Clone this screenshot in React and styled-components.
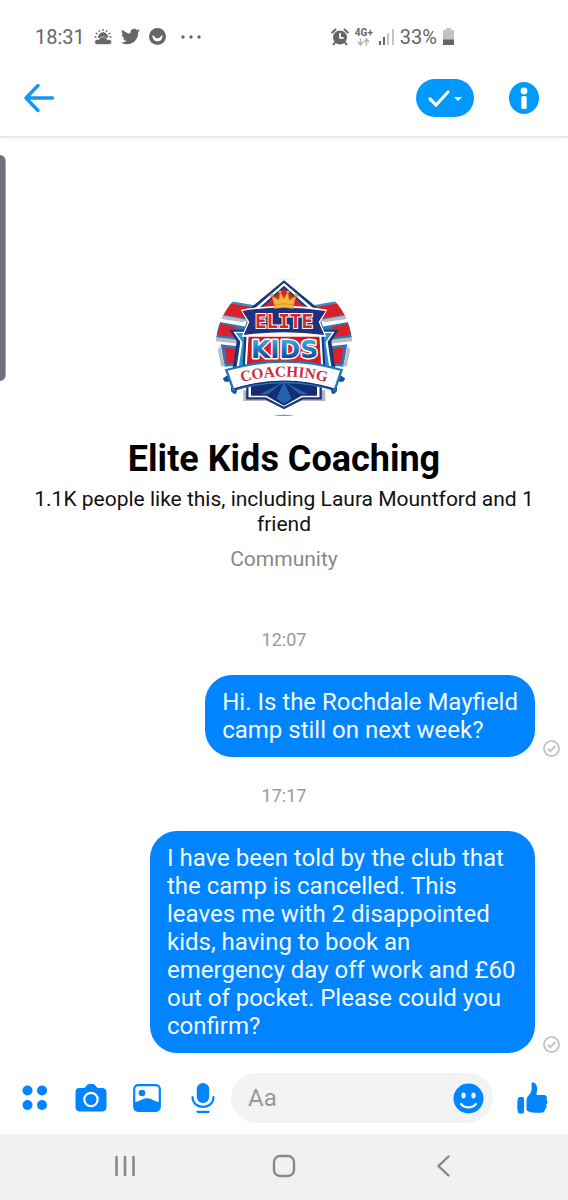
import React from "react";
import styled, { createGlobalStyle } from "styled-components";
import { FaTwitter } from "react-icons/fa";

const GlobalStyle = createGlobalStyle`
  *, *::before, *::after { box-sizing: border-box; }
  body { margin: 0; background: #fff; font-family: Roboto, "Liberation Sans", sans-serif; }
  h1, p { margin: 0; font-weight: 400; }
  button { border: 0; padding: 0; background: none; cursor: pointer; font: inherit; }
  svg { display: block; flex: none; }
`;

const Page = styled.div`
  display: flex;
  flex-direction: column;
  min-height: 100vh;
  background: #fff;
`;

const StatusBar = styled.div`
  display: flex;
  justify-content: space-between;
  align-items: center;
  height: 73px;
  padding: 0 114px 0 35px;
  color: #666;
  font-size: 20px;
`;

const StatusGroup = styled.div`
  display: flex;
  align-items: center;
  gap: ${(p) => p.$gap}px;
`;

const Network = styled.span`
  display: flex;
  flex-direction: column;
  align-items: center;
  font-size: 10px;
  line-height: 10px;
  font-weight: 700;
`;

const Header = styled.header`
  display: flex;
  align-items: center;
  height: 65px;
  padding: 0 29px 13px 23px;
  border-bottom: 2px solid #e9e9e9;
  box-shadow: 0 2px 3px rgba(0, 0, 0, 0.03);
`;

const IconButton = styled.button`
  display: flex;
  align-items: center;
  justify-content: center;
  color: #0084ff;
`;

const ToolButton = styled(IconButton)`
  width: 32px;
  height: 32px;
`;

const DoneButton = styled(IconButton)`
  width: 58px;
  height: 38px;
  margin: 0 35px 0 auto;
  border-radius: 19px;
  background: #0099ff;
`;

const Conversation = styled.main`
  position: relative;
  flex: 1;
`;

const EdgeHandle = styled.div`
  position: absolute;
  top: 17px;
  left: 0;
  width: 6px;
  height: 226px;
  border-radius: 0 6px 6px 0;
  background: #716e80;
  border-right: 1px solid #a9a7b3;
`;

const Profile = styled.section`
  display: flex;
  flex-direction: column;
  align-items: center;
  padding: 139px 30px 56px;
  text-align: center;
`;

const Name = styled.h1`
  margin-top: 20px;
  font-size: 36px;
  line-height: 44px;
  font-weight: 700;
  color: #000;
`;

const Likes = styled.p`
  margin-top: 6px;
  font-size: 21px;
  line-height: 25px;
  color: #111;
`;

const Category = styled.p`
  margin-top: 10px;
  font-size: 21px;
  line-height: 25px;
  color: #888;
`;

const Time = styled.time`
  display: block;
  margin-bottom: 23px;
  text-align: center;
  font-size: 18px;
  line-height: 24px;
  color: #999;
`;

const MessageRow = styled.div`
  display: flex;
  justify-content: flex-end;
  align-items: flex-end;
  gap: 8px;
  padding-right: 8px;
  & + time { margin-top: 27px; }
`;

const Bubble = styled.p`
  max-width: 385px;
  padding: 13px 17px;
  border-radius: 27px;
  background: #0084ff;
  color: #f2faff;
  font-size: 24px;
  line-height: 28px;
  white-space: pre-line;
`;

const Composer = styled.form`
  display: flex;
  align-items: center;
  padding: 20px 20px 11px 19px;
`;

const Tools = styled.div`
  display: flex;
  align-items: center;
  gap: 24px;
  margin-right: 12px;
`;

const Field = styled.div`
  display: flex;
  align-items: center;
  flex: 1;
  min-width: 0;
  height: 50px;
  margin-right: 24px;
  padding: 0 9px 0 17px;
  border-radius: 25px;
  background: #f1f3f5;
`;

const TextInput = styled.input`
  flex: 1;
  min-width: 0;
  padding: 0;
  border: 0;
  outline: 0;
  background: transparent;
  color: #222;
  font: 24px/28px Roboto, "Liberation Sans", sans-serif;
  &::placeholder { color: #999; opacity: 1; }
`;

const NavBar = styled.nav`
  display: flex;
  align-items: center;
  justify-content: center;
  gap: 136px;
  height: 66px;
  padding-bottom: 2px;
  background: #f1f1f1;
`;

const messages = [
  { time: "12:07", text: "Hi. Is the Rochdale Mayfield\ncamp still on next week?" },
  {
    time: "17:17",
    text: "I have been told by the club that the camp is cancelled. This leaves me with 2 disappointed kids, having to book an emergency day off work and £60 out of pocket. Please could you confirm?",
  },
];

const Weather = () => (
  <svg width="18" height="16" viewBox="0 0 18 16" fill="none" stroke="#666">
    <path d="M9 0v2M4.8 1.2l.9 1.7M13.2 1.2l-.9 1.7M1.8 4l1.6 1.1M16.2 4l-1.6 1.1M.5 8h2M15.5 8h2" strokeWidth="1.3" />
    <path d="M4.6 9a4.500 4.500 0 0 1 9-1.500l-1 2-3.600-2z" fill="#666" strokeWidth="1" />
    <path d="M3.300 15.500a2.600 2.600 0 0 1 0-5.200c.7 0 1.100.2 1.500.5.700-1.900 2.200-3 4.200-3s3.400 1 4 2.700c3-.4 4.700.7 4.700 2.500 0 1.600-1.200 2.500-2.700 2.500z" fill="#666" stroke="#fff" strokeWidth=".6" />
  </svg>
);

const FaceBadge = () => (
  <svg width="17" height="17" viewBox="0 0 17 17">
    <circle cx="8.500" cy="8.500" r="8.500" fill="#666" />
    <path d="M3.400 8c.4-.6 1.500-.5 1.900.2.600 1.400 1.700 2 3.200 2s2.600-.6 3.200-2c.4-.7 1.500-.8 1.900-.2-.2 3.300-2.100 5.300-5.100 5.300S3.600 11.300 3.400 8z" fill="#fff" />
  </svg>
);

const Alarm = () => (
  <svg width="18" height="18" viewBox="0 0 18 18" fill="none" stroke="#666" strokeLinecap="round">
    <circle cx="9" cy="9.500" r="7" fill="#666" stroke="none" />
    <path d="M1.200 4.500 4.500 1.500M16.800 4.500 13.500 1.500M4 14.500l-1.500 2M14 14.500l1.500 2" strokeWidth="2" />
    <path d="M9 5.500v4.300h3" stroke="#fff" strokeWidth="1.700" />
  </svg>
);

const Arrows = () => (
  <svg width="13" height="8" viewBox="0 0 13 8" fill="none" stroke="#b5b5b5" strokeWidth="1.500">
    <path d="M3.500.5v6M1 4l2.500 3L6 4M9.500 7.500v-6M7 4l2.500-3L12 4" />
  </svg>
);

const Signal = () => (
  <svg width="15" height="16" viewBox="0 0 15 16">
    <path d="M0 12h2v4H0zM4 8h2v8H4z" fill="#666" />
    <path d="M8 4h2v12H8zM13 0h2v16h-2z" fill="#c4c4c4" />
  </svg>
);

const Battery = () => (
  <svg width="11" height="17" viewBox="0 0 11 17">
    <path d="M3 0h5v2h3v10H0V2h3z" fill="#c2c2c2" />
    <path d="M0 11.500h11V17H0z" fill="#666" />
  </svg>
);

const Receipt = () => (
  <svg width="17" height="17" viewBox="0 0 17 17" fill="none" stroke="#bcc0c5" strokeWidth="1.700">
    <circle cx="8.500" cy="8.500" r="7.500" />
    <path d="m4.800 8.700 2.500 2.500 5-5.200" />
  </svg>
);

const WingSide = () => (
  <g>
    <path d="m66 90 104 18-42 44-86-14z" fill="#3a8fc4" />
    <path d="m74 98 88 16-32 32-78-14z" fill="#dc2029" />
    <path d="m52 135 74 13-6 8-74-11z" fill="#b9bec6" />
    <path d="m44 154 82 15-20 42-70-8z" fill="#2a78b8" />
    <path d="m48 160 48 10-6 30-50-6z" fill="#dc2029" />
    <path d="m32 200 72 8v12l-68-7z" fill="#b9bec6" />
    <path d="m50 222 62 7v56l-50 4z" fill="#2a78b8" />
    <path d="m62 232 44 4v44l-38 1z" fill="#dc2029" />
    <path d="m48 226 14 60-10 4-10-52z" fill="#b9bec6" />
  </g>
);

const Crest = () => (
  <svg width="140" height="140" viewBox="30 20 420 420" role="img" aria-label="Elite Kids Coaching crest">
    <defs>
      <clipPath id="round"><circle cx="240" cy="231" r="206" /></clipPath>
      <linearGradient id="kids" x1="0" y1="0" x2="0" y2="1">
        <stop offset="0.2" stopColor="#3aa5dc" />
        <stop offset="0.75" stopColor="#17509c" />
      </linearGradient>
      <radialGradient id="red"><stop stopColor="#f12b30" /><stop offset="1" stopColor="#c91826" /></radialGradient>
      <path id="ribbonLine" d="M105 337q135-36 270 0" />
    </defs>
    <g clipPath="url(#round)">
      <path d="M200 25h80" stroke="#c9c9c9" strokeWidth="4" />
      <path d="M200 437q40-8 80 0z" fill="#888" />
      <WingSide />
      <g transform="translate(480 0) scale(-1 1)"><WingSide /></g>
      <path d="M118 360v32h70l52 22 52-22h72v-32z" fill="#b3b6bf" />
      <path d="m240 30 112 92H128z" fill="#19377d" />
      <path d="m240 38 102 88H138z" fill="#fff" />
      <path d="m240 46 94 84H146z" fill="#19377d" />
      <path d="m240 54 84 74H156z" fill="url(#red)" />
      <path d="M76 178h44l10-29h220l10 29h44l-22 35 18 120H80l18-120z" fill="#19377d" />
      <path d="M88 184h40l5-27h214l5 27h40l-21 30 17 115H92l17-115z" fill="#fff" />
      <path d="M96 188h38l7-24h198l7 24h38l-19 27 16 113H99l16-113z" fill="#2a93d0" />
      <path d="M122 186h236l9 146H113z" fill="#19377d" />
      <path d="M128 190h224l8 141H120z" fill="#fff" />
      <path d="M134 194h212l8 137H126z" fill="url(#red)" />
      <path d="M130 320h220v64h-54l-56 29-56-29h-54z" fill="#fff" stroke="#19377d" strokeWidth="7" />
      <path d="M141 324h198v52h-46l-53 30-53-30h-46z" fill="#152c72" />
      <path d="m240 334-72 38h25l47-38-23 51 23 15 23-15-23-51 47 38h25z" fill="#2461ab" />
      <path d="M110 118q130-23 260 0l-21 37 18 44H113l18-44z" fill="#fff" />
      <path d="M115 122q125-21 250 0l-21 33 17 39q-121-17-242 0l17-39z" fill="#20317c" />
      <g fill="#f5b83d" stroke="#c97721" strokeWidth="2">
        <path d="m212 106-8-29 20 12 5-24 11 20 11-20 5 24 20-12-8 29q-28-7-56 0z" />
        <path d="M211 104q29-8 58 0v11q-29-8-58 0z" />
        <circle cx="203" cy="75" r="5" /><circle cx="228" cy="65" r="4" /><circle cx="252" cy="65" r="4" /><circle cx="277" cy="75" r="5" />
      </g>
      <text x="240" y="174" textAnchor="middle" fontFamily="DejaVu Sans Mono, monospace" fontWeight="700" fontSize="58" fill="#d82431" stroke="#fff" strokeWidth="6" paintOrder="stroke">ELITE</text>
      <text x="242" y="263" textAnchor="middle" fontFamily="DejaVu Sans, sans-serif" fontWeight="700" fontSize="75" fill="url(#kids)" stroke="#fff" strokeWidth="9" strokeLinejoin="round" paintOrder="stroke">KIDS</text>
      <path d="m55 325 21-14 29 30-9 30-15-3v-34H57zM425 325l-21-14-29 30 9 30 15-3v-34h24z" fill="#17509c" />
      <path d="M67 299q173-50 346 0l-21 60q-152-47-304 0z" fill="#fff" stroke="#2277b8" strokeWidth="7" />
      <path d="M91 356q149-47 298 0" fill="none" stroke="#152c72" strokeWidth="4" />
      <text fontFamily="Liberation Serif, serif" fontWeight="700" fontSize="46" fill="#c82f44" textAnchor="middle"><textPath href="#ribbonLine" startOffset="50%">COACHING</textPath></text>
    </g>
  </svg>
);

export default function App() {
  return (
    <Page>
      <GlobalStyle />
      <StatusBar>
        <StatusGroup $gap={9}>
          <span>18:31</span>
          <Weather />
          <FaTwitter size={19} />
          <FaceBadge />
          <svg width="32" height="4" viewBox="0 0 32 4" fill="#666">
            <circle cx="8" cy="2" r="1.700" /><circle cx="16" cy="2" r="1.700" /><circle cx="24" cy="2" r="1.700" />
          </svg>
        </StatusGroup>
        <StatusGroup $gap={6}>
          <Alarm />
          <Network>4G+<Arrows /></Network>
          <Signal />
          <span>33%</span>
          <Battery />
        </StatusGroup>
      </StatusBar>

      <Header>
        <IconButton type="button" aria-label="Back">
          <svg width="32" height="30" viewBox="0 0 32 30" fill="none" stroke="#1298ee" strokeWidth="3.400" strokeLinecap="round" strokeLinejoin="round">
            <path d="M15 2.500 3 15l12 12.500M3 15h26.500" />
          </svg>
        </IconButton>
        <DoneButton type="button" aria-label="Mark as done">
          <svg width="36" height="20" viewBox="0 0 36 20" fill="none">
            <path d="m3 11 6 6L21 4" stroke="#fff" strokeWidth="3.200" strokeLinecap="round" />
            <path d="M27 9h8l-4 4z" fill="#fff" />
          </svg>
        </DoneButton>
        <IconButton type="button" aria-label="Information">
          <svg width="30" height="32" viewBox="0 0 30 32">
            <ellipse cx="15" cy="16" rx="15" ry="16" fill="#0099ff" />
            <circle cx="15" cy="9" r="3.400" fill="#fff" />
            <rect x="12.300" y="14" width="5.400" height="13" rx="1.500" fill="#fff" />
          </svg>
        </IconButton>
      </Header>

      <Conversation>
        <EdgeHandle />
        <Profile>
          <Crest />
          <Name>Elite Kids Coaching</Name>
          <Likes>1.1K people like this, including Laura Mountford and 1 friend</Likes>
          <Category>Community</Category>
        </Profile>
        {messages.map((m) => (
          <React.Fragment key={m.time}>
            <Time>{m.time}</Time>
            <MessageRow>
              <Bubble>{m.text}</Bubble>
              <Receipt />
            </MessageRow>
          </React.Fragment>
        ))}
      </Conversation>

      <Composer onSubmit={(e) => e.preventDefault()}>
        <Tools>
          <ToolButton type="button" aria-label="More">
            <svg width="26" height="26" viewBox="0 0 26 26" fill="currentColor">
              <circle cx="5.500" cy="5.500" r="5" /><circle cx="20" cy="5.500" r="5" /><circle cx="5.500" cy="20" r="5" /><circle cx="20" cy="20" r="5" />
            </svg>
          </ToolButton>
          <ToolButton type="button" aria-label="Camera">
            <svg width="32" height="28" viewBox="0 0 32 28">
              <path d="M4 4h4.500c1.500 0 2-1.200 3-2.400S13.500 0 16 0s3.500.4 4.500 1.600S22 4 23.500 4H27c3 0 4.500 1.700 4.500 4.500v14c0 3.500-1.500 5-5 5h-21C2 27.500.5 26 .5 22.500v-14C.5 5.700 1.500 4 4 4z" fill="currentColor" />
              <circle cx="16" cy="15.500" r="6.700" fill="none" stroke="#fff" strokeWidth="2.200" />
            </svg>
          </ToolButton>
          <ToolButton type="button" aria-label="Gallery">
            <svg width="28" height="28" viewBox="0 0 28 28">
              <rect x="1.200" y="1.200" width="25.600" height="25.600" rx="4" fill="#fff" stroke="currentColor" strokeWidth="2.200" />
              <circle cx="9" cy="9" r="3.300" fill="currentColor" />
              <path d="M1.500 18.500c3-.8 5.500-2 8-3.200 3-1.400 6-1.400 9 0 2.500 1.200 5 2.400 8 3.200v4.500c0 3-1 4-4 4h-17c-3 0-4-1-4-4z" fill="currentColor" />
            </svg>
          </ToolButton>
          <ToolButton type="button" aria-label="Voice message">
            <svg width="24" height="30" viewBox="0 0 24 30" fill="none" stroke="currentColor" strokeWidth="2.200" strokeLinecap="round">
              <rect x="5.800" y="0" width="12.400" height="20" rx="6.200" fill="currentColor" stroke="none" />
              <path d="M1.500 14c0 6 4.500 9.800 10.500 9.800S22.500 20 22.500 14M6.500 28.800h11" />
            </svg>
          </ToolButton>
        </Tools>
        <Field>
          <TextInput type="text" placeholder="Aa" aria-label="Message" />
          <IconButton type="button" aria-label="Emoji">
            <svg width="31" height="31" viewBox="0 0 31 31">
              <circle cx="15.500" cy="15.500" r="15" fill="currentColor" />
              <ellipse cx="10.500" cy="12.500" rx="2.200" ry="2.900" fill="#f1f3f5" />
              <ellipse cx="20.500" cy="12.500" rx="2.200" ry="2.900" fill="#f1f3f5" />
              <path d="M8 21c3.500 4.500 11.500 4.500 15 0" fill="none" stroke="#f1f3f5" strokeWidth="2.200" strokeLinecap="round" />
            </svg>
          </IconButton>
        </Field>
        <IconButton type="button" aria-label="Like">
          <svg width="31" height="32" viewBox="0 0 31 32" fill="currentColor">
            <path d="M2.500 15H5c1.300 0 2 .6 2 2v12.500c0 1.400-.7 2-2 2H2.800C.8 31.500.3 28 .3 23S.8 15 2.500 15z" />
            <path d="M14.500 1.500c.3-1.500 3-1.300 4.200.5 1.600 2.300 2 5.500.8 9.200-.4 1.200 0 1.700 1.300 1.700h5.500c3.300 0 4.500 2.700 3 4.700 1.700 1.600 1.500 4.100-.2 5.200 1 1.900.4 3.800-1.300 4.600.2 2.100-1.300 3.200-4.300 3.300-4.500.2-9 .1-12-1.100-1.700-.7-2-1.600-2-3.300v-8c0-2.300.8-3.400 2.500-5.200 2.500-2.700 3-5.500 2.500-11.600z" />
          </svg>
        </IconButton>
      </Composer>

      <NavBar aria-label="System navigation">
        <IconButton type="button" aria-label="Recent apps">
          <svg width="24" height="22" viewBox="0 0 24 22" stroke="#888" strokeWidth="2.600" strokeLinecap="round">
            <path d="M4.500 2v18M13 2v18M21.500 2v18" />
          </svg>
        </IconButton>
        <IconButton type="button" aria-label="Home">
          <svg width="24" height="24" viewBox="0 0 24 24" fill="none" stroke="#888" strokeWidth="2.400">
            <rect x="2" y="2" width="20" height="20" rx="6" />
          </svg>
        </IconButton>
        <IconButton type="button" aria-label="Navigate back">
          <svg width="24" height="24" viewBox="0 0 24 24" fill="none" stroke="#888" strokeWidth="2.400" strokeLinecap="round">
            <path d="m16.500 2.500-10 9.500 10 9.500" />
          </svg>
        </IconButton>
      </NavBar>
    </Page>
  );
}
